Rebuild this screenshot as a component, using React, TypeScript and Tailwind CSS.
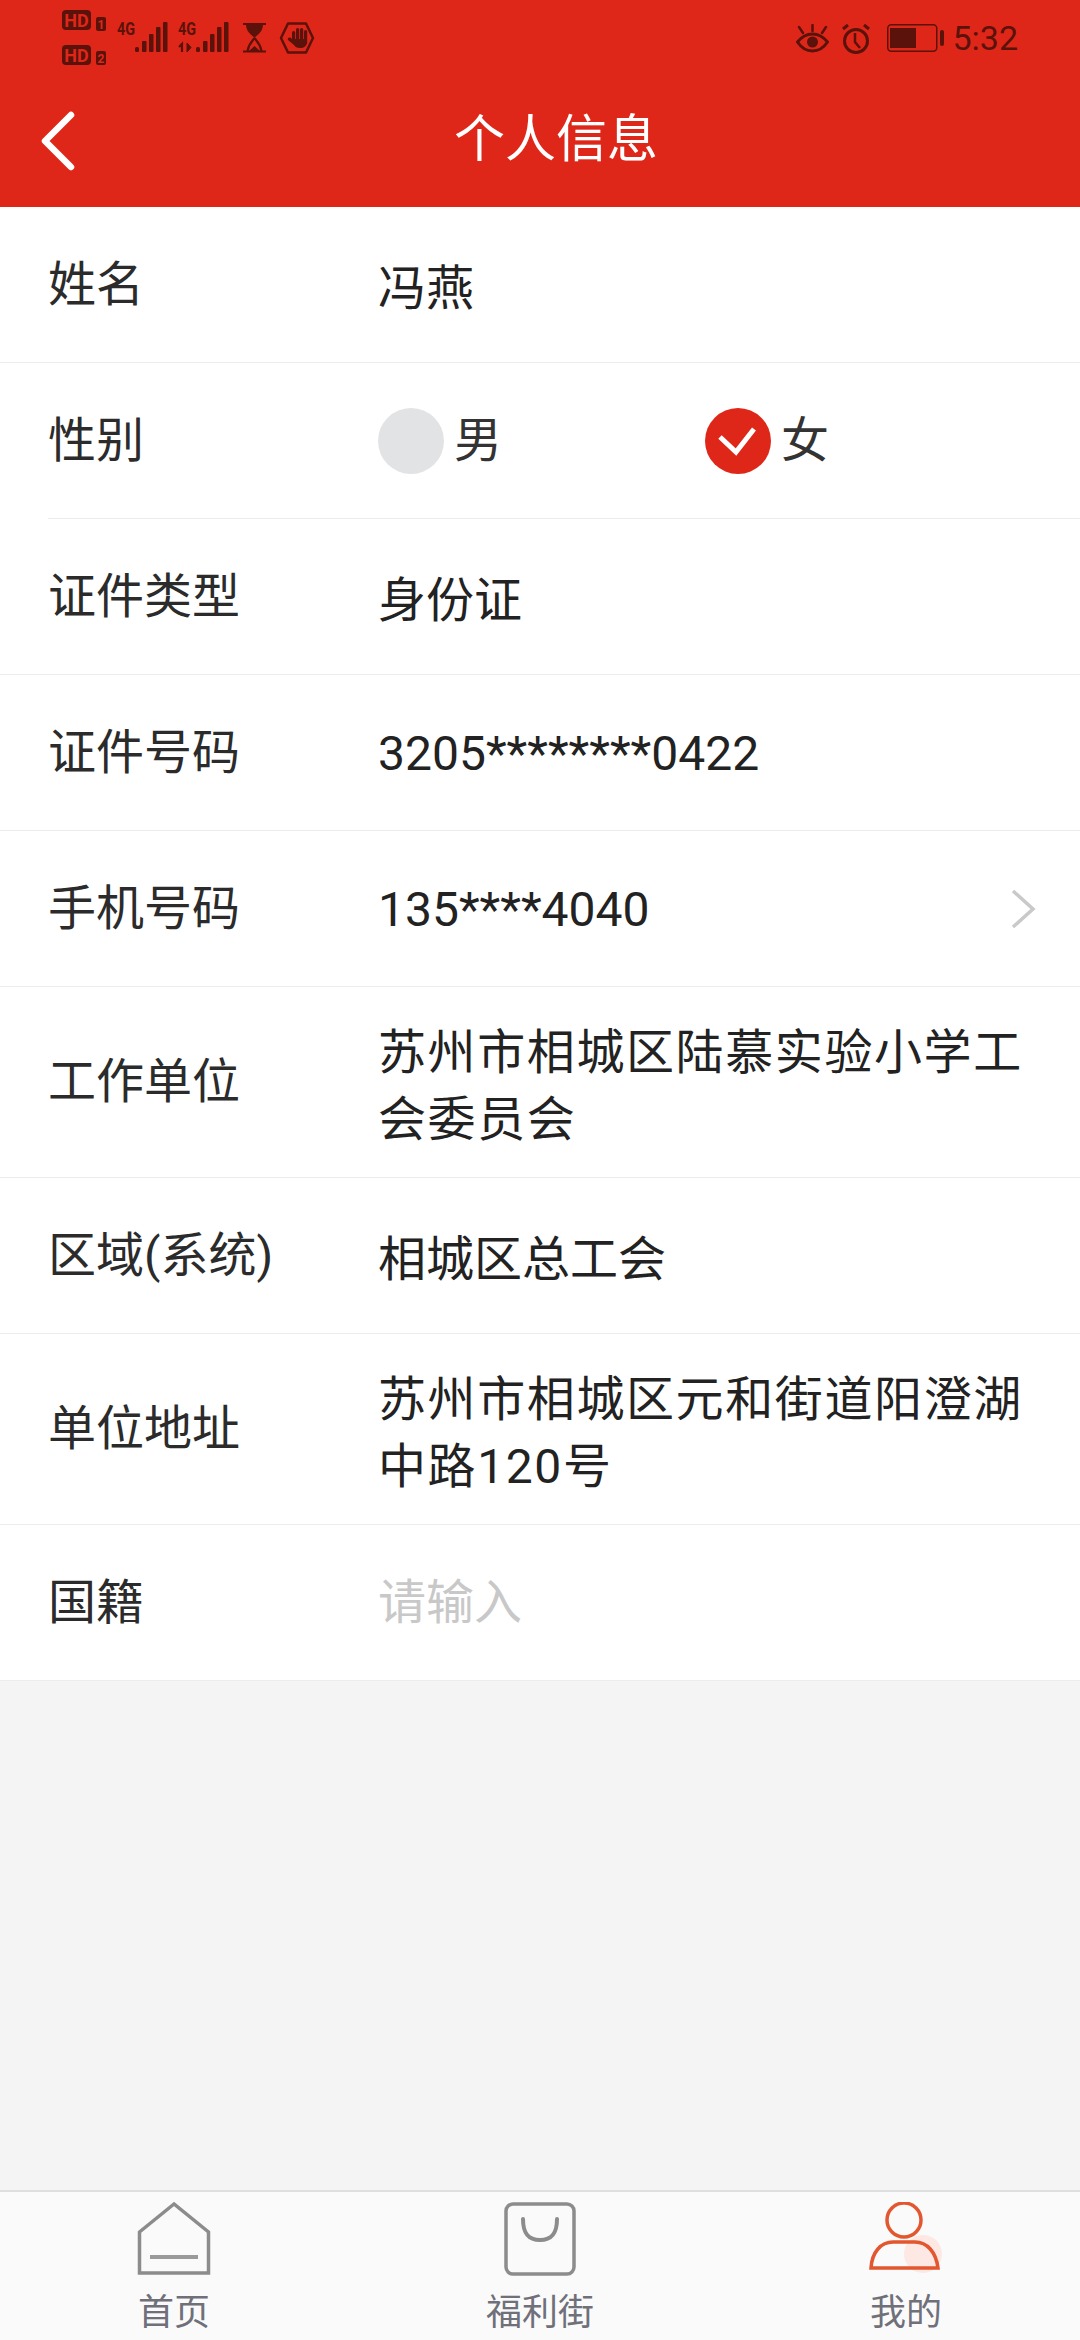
const FONT = "font-['Roboto','Noto_Sans_CJK_SC',sans-serif]";

function LeftStatus() {
  const c = '#5a120b';
  const red = '#df2719';
  const font = { fontFamily: 'Roboto, sans-serif', fontWeight: 700 } as const;
  return (
    <svg width="260" height="70" viewBox="0 0 260 70" fill="none">
      <rect x="0" y="10" width="29" height="20" rx="4" fill={c} />
      <text x="14.5" y="26.5" textAnchor="middle" fontSize="18" fill={red} style={font}>HD</text>
      <rect x="34" y="17" width="10" height="14" rx="2" fill={c} />
      <text x="39" y="29" textAnchor="middle" fontSize="12" fill={red} style={font}>1</text>
      <rect x="0" y="45" width="29" height="20" rx="4" fill={c} />
      <text x="14.5" y="61.5" textAnchor="middle" fontSize="18" fill={red} style={font}>HD</text>
      <rect x="34" y="51" width="10" height="14" rx="2" fill={c} />
      <text x="39" y="63" textAnchor="middle" fontSize="12" fill={red} style={font}>2</text>

      <text x="55" y="35" fontSize="18" textLength="18" lengthAdjust="spacingAndGlyphs" fill={c} style={font}>4G</text>
      <rect x="73" y="47" width="4" height="5" rx="1.5" fill={c} />
      <rect x="80" y="41" width="4.5" height="11" rx="1" fill={c} />
      <rect x="87" y="34" width="4.5" height="18" rx="1" fill={c} />
      <rect x="94" y="27" width="4.5" height="25" rx="1" fill={c} />
      <rect x="101" y="22" width="4.5" height="30" rx="1" fill={c} />

      <text x="116" y="35" fontSize="18" textLength="18" lengthAdjust="spacingAndGlyphs" fill={c} style={font}>4G</text>
      <path d="M120 52V44l-3 3" stroke={c} strokeWidth="2.2" />
      <path d="M125 43v9l4-4.5z" fill={c} stroke={c} strokeWidth="1" />
      <rect x="134" y="47" width="4" height="5" rx="1.5" fill={c} />
      <rect x="141" y="41" width="4.5" height="11" rx="1" fill={c} />
      <rect x="148" y="34" width="4.5" height="18" rx="1" fill={c} />
      <rect x="155" y="27" width="4.5" height="25" rx="1" fill={c} />
      <rect x="162" y="22" width="4.5" height="30" rx="1" fill={c} />

      <path d="M181 24h23M181 51.5h23" stroke={c} strokeWidth="2" />
      <path d="M184 24h17c0 8-5 10-8.500 14-3.500-4-8.500-6-8.500-14z" fill={c} />
      <path d="M192.500 38c-2 3-6 6-7 13M192.500 38c2 3 6 6 7 13" stroke={c} strokeWidth="2.2" />
      <path d="M187 51l5.500-5 5.500 5z" fill={c} />

      <path d="M226 23.500h18l7 14.500-7 14.500h-18l-7-14.500z" stroke={c} strokeWidth="2.5" strokeLinejoin="round" />
      <rect x="230" y="31" width="3.200" height="12" rx="1.600" fill={c} />
      <rect x="234" y="28" width="3.200" height="14" rx="1.600" fill={c} />
      <rect x="238" y="28" width="3.200" height="14" rx="1.600" fill={c} />
      <rect x="242" y="30" width="3.200" height="14" rx="1.600" fill={c} />
      <path d="M230 39h15v3c0 4-3 6-7 6-3 0-5-1-6-3l-6-5c-1-2 1-3 3-2z" fill={c} />
    </svg>
  );
}

function RightStatus() {
  const c = '#5a120b';
  return (
    <div className="flex items-center">
      <svg width="33" height="29" viewBox="0 0 33 29" fill="none" className="mr-[12px]">
        <path d="M1.500 18c4-5 9-8 15-8s11 3 15 8c-4 6-9 9-15 9s-11-3-15-9z" stroke={c} strokeWidth="3" />
        <circle cx="16.500" cy="18" r="5.500" fill={c} />
        <path d="M16.500 1v6M3 3l4 6M30 3l-4 6" stroke={c} strokeWidth="2.500" strokeLinecap="round" />
      </svg>
      <svg width="30" height="31" viewBox="0 0 30 31" fill="none" className="mr-[16px]">
        <circle cx="15" cy="18" r="11.500" stroke={c} strokeWidth="3" />
        <path d="M14 10v9l5 6" stroke={c} strokeWidth="2.500" />
        <path d="M2 6l5-4M28 6l-5-4" stroke={c} strokeWidth="3" />
      </svg>
      <svg width="57" height="28" viewBox="0 0 57 28" fill="none" className="mr-[8px]">
        <rect x="0.750" y="0.750" width="49" height="26.500" rx="3.500" stroke={c} strokeWidth="1.500" />
        <rect x="3" y="4" width="26" height="20" fill={c} />
        <rect x="53" y="6" width="4" height="16" rx="2" fill={c} />
      </svg>
      <span className="text-[34px] leading-none text-[#5a120b] font-['Roboto',sans-serif]">5:32</span>
    </div>
  );
}

function Row({
  label,
  children,
  tall,
  inset,
  arrow,
  valueClass = '',
}: {
  label: string;
  children: React.ReactNode;
  tall?: boolean;
  inset?: boolean;
  arrow?: boolean;
  valueClass?: string;
}) {
  return (
    <div className={`bg-white ${inset ? 'pl-[48px]' : 'pl-0'}`}>
      <div
        className={`flex items-center border-b border-[#ececec] ${inset ? '' : 'pl-[48px]'} ${tall ? 'h-[191px]' : 'h-[156px]'}`}
      >
        <div className="w-[330px] shrink-0 text-[48px] leading-none text-[#2b2b2b]">{label}</div>
        <div className={`flex-1 text-[48px] text-[#222] ${valueClass}`}>{children}</div>
        {arrow && (
          <svg width="26" height="40" viewBox="0 0 26 40" fill="none" className="mr-[44px]">
            <path d="M3 2l20 18L3 38" stroke="#c9c9c9" strokeWidth="3.500" />
          </svg>
        )}
      </div>
    </div>
  );
}

function Radio({ checked, label }: { checked?: boolean; label: string }) {
  return (
    <div className="flex items-center">
      <div
        className={`w-[66px] h-[66px] rounded-full flex items-center justify-center ${checked ? 'bg-[#df2719]' : 'bg-[#e2e3e5]'}`}
      >
        {checked && (
          <svg width="42" height="30" viewBox="0 0 42 30" fill="none">
            <path d="M3 11l16 15L37 3" stroke="#fff" strokeWidth="5" />
          </svg>
        )}
      </div>
      <span className="ml-[10px] text-[#333] leading-none">{label}</span>
    </div>
  );
}

function NavItem({ label, children }: { label: string; children: React.ReactNode }) {
  return (
    <div className="w-[366px] shrink-0 flex flex-col items-center pt-[10px]">
      {children}
      <span className="text-[36px] leading-none text-[#6f7079] mt-[19px]">{label}</span>
    </div>
  );
}

export default function App() {
  return (
    <div className={`w-[1080px] h-[2340px] overflow-hidden flex flex-col bg-[#f4f4f4] ${FONT}`}>
      <header className="h-[207px] bg-[#df2719] shrink-0 flex flex-col">
        <div className="h-[70px] flex items-start justify-between pl-[62px] pr-[62px]">
          <LeftStatus />
          <div className="h-[76px] flex items-center">
            <RightStatus />
          </div>
        </div>
        <div className="relative flex-1 flex items-center justify-center">
          <svg width="36" height="60" viewBox="0 0 36 60" fill="none" className="absolute left-[39px] top-[41px]">
            <path d="M32 4L6 30l26 26" stroke="#fff" strokeWidth="6.500" strokeLinecap="round" strokeLinejoin="round" />
          </svg>
          <span className="text-[51px] leading-none text-white ml-[32px] mt-[2px]">个人信息</span>
        </div>
      </header>

      <main className="flex-1">
        <Row label="姓名" valueClass="pt-2">冯燕</Row>
        <Row label="性别" inset>
          <div className="flex">
            <div className="w-[327px]">
              <Radio label="男" />
            </div>
            <Radio checked label="女" />
          </div>
        </Row>
        <Row label="证件类型" valueClass="pt-2">身份证</Row>
        <Row label="证件号码" valueClass="pt-[2px]">3205********0422</Row>
        <Row label="手机号码" arrow valueClass="pt-[2px]">135****4040</Row>
        <Row label="工作单位" tall valueClass="pt-2">
          <div className="leading-[67px] tracking-[1.6px] whitespace-nowrap">
            <div>苏州市相城区陆慕实验小学工</div>
            <div>会委员会</div>
          </div>
        </Row>
        <Row label="区域(系统)" valueClass="pt-2">相城区总工会</Row>
        <Row label="单位地址" tall valueClass="pt-2">
          <div className="leading-[67px] tracking-[1.6px] whitespace-nowrap">
            <div>苏州市相城区元和街道阳澄湖</div>
            <div>中路120号</div>
          </div>
        </Row>
        <Row label="国籍">
          <span className="text-[#c8c8c8]">请输入</span>
        </Row>
      </main>

      <nav className="h-[150px] shrink-0 bg-[#fafafa] border-t-[2px] border-[#dedede] flex justify-center">
        <NavItem label="首页">
          <svg width="74" height="74" viewBox="0 0 74 74" fill="none">
            <path d="M37 2L2.500 30v41h69V30z" stroke="#8c8c8c" strokeWidth="3.500" />
            <path d="M13 55h48" stroke="#9a9a9a" strokeWidth="4" />
          </svg>
        </NavItem>
        <NavItem label="福利街">
          <svg width="74" height="74" viewBox="0 0 74 74" fill="none">
            <rect x="3" y="2" width="68" height="70" rx="7" stroke="#8c8c8c" strokeWidth="3.500" />
            <path d="M20 17c0 14 5 21 17 21s17-7 17-21" stroke="#8c8c8c" strokeWidth="4" strokeLinecap="round" />
          </svg>
        </NavItem>
        <NavItem label="我的">
          <svg width="74" height="74" viewBox="0 0 74 74" fill="none">
            <ellipse cx="54" cy="52" rx="19" ry="19" fill="#fde8e4" />
            <ellipse cx="35" cy="18" rx="17" ry="17" stroke="#e2572f" strokeWidth="3.500" />
            <path d="M2 66C3 50 12 40 24 40h22c12 0 21 10 23 26z" stroke="#e2572f" strokeWidth="3.500" />
          </svg>
        </NavItem>
      </nav>
    </div>
  );
}
